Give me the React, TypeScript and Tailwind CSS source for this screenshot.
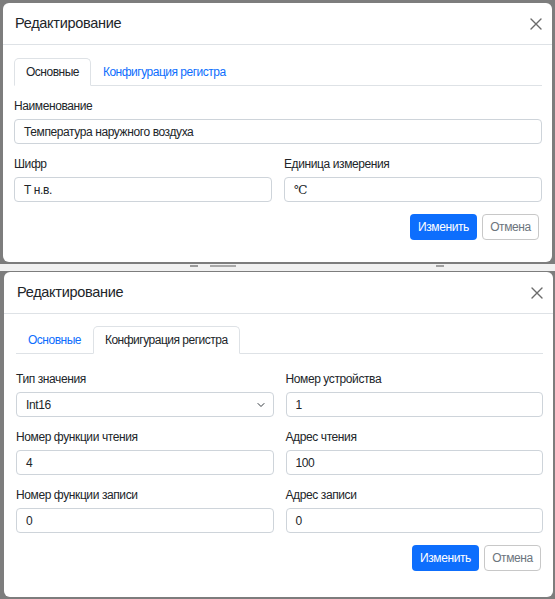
import React from "react";
import { ChevronDown } from "lucide-react";

const font = { fontFamily: '"Liberation Sans", Arial, sans-serif' };

function CloseX() {
  return (
    <svg width="12" height="12" viewBox="0 0 12 12" className="block">
      <path d="M1 1 L11 11 M11 1 L1 11" stroke="#6b6b6b" strokeWidth="1.4" strokeLinecap="round" />
    </svg>
  );
}

function Field({ label, value, serif }: { label: string; value: string; serif?: boolean }) {
  return (
    <div className="flex flex-col">
      <div className="text-[12px] tracking-[-0.4px] leading-[20px] mb-[3px] text-[#212529]">{label}</div>
      <div className="h-[25px] border border-[#ced4da] rounded-[4px] bg-white flex items-center pl-[9px] text-[12px] tracking-[-0.4px] text-[#212529]">
        {serif ? <span style={{ fontFamily: '"Liberation Serif", "DejaVu Serif", serif' }}>{value}</span> : value}
      </div>
    </div>
  );
}

function SelectField({ label, value }: { label: string; value: string }) {
  return (
    <div className="flex flex-col">
      <div className="text-[12px] tracking-[-0.4px] leading-[20px] mb-[3px] text-[#212529]">{label}</div>
      <div className="h-[25px] border border-[#ced4da] rounded-[4px] bg-white flex items-center justify-between pl-[9px] pr-[6px] text-[12px] tracking-[-0.4px] text-[#212529]">
        <span>{value}</span>
        <ChevronDown size={12} strokeWidth={2} color="#343a40" />
      </div>
    </div>
  );
}

function Tabs({ active }: { active: 0 | 1 }) {
  const names = ["Основные", "Конфигурация регистра"];
  return (
    <div className="flex border-b border-[#dee2e6]">
      {names.map((n, i) =>
        i === active ? (
          <div
            key={n}
            className="h-[28px] -mb-px px-[11px] flex items-center text-[12px] tracking-[-0.5px] text-[#212529] bg-white border border-[#dee2e6] border-b-white rounded-t-[5px]"
          >
            {n}
          </div>
        ) : (
          <div
            key={n}
            className="h-[28px] -mb-px px-[11px] flex items-center text-[12px] tracking-[-0.5px] text-[#0d6efd] border border-transparent"
          >
            {n}
          </div>
        )
      )}
    </div>
  );
}

function Buttons({ mr }: { mr: string }) {
  return (
    <div className={`flex justify-end gap-[5px] ${mr}`}>
      <div className="h-[26px] w-[67px] rounded-[4px] bg-[#0d6efd] text-white text-[12px] tracking-[-0.4px] flex items-center justify-center">
        Изменить
      </div>
      <div className="h-[26px] w-[57px] rounded-[4px] border border-[#c8c8c8] text-[#6c757d] text-[12px] tracking-[-0.4px] flex items-center justify-center bg-white">
        Отмена
      </div>
    </div>
  );
}

export default function App() {
  return (
    <div className="w-[555px] h-[599px] bg-[#7d7d7d] overflow-hidden" style={font}>
      {/* Modal 1 */}
      <div className="mt-[3px] ml-[3px] w-[549px] h-[259px] bg-white rounded-[6px] flex flex-col">
        <div className="h-[42px] border-b border-[#dee2e6] flex items-center justify-between pl-[12px] pr-[10px]">
          <div className="text-[14.5px] tracking-[-0.3px] text-[#212529]">Редактирование</div>
          <CloseX />
        </div>
        <div className="pt-[13px] pl-[11px] pr-[10px] flex flex-col">
          <Tabs active={0} />
          <div className="mt-[10px]">
            <Field label="Наименование" value="Температура наружного воздуха" />
          </div>
          <div className="mt-[10px] grid grid-cols-2 gap-[12px]">
            <Field label="Шифр" value="Т н.в." />
            <Field label="Единица измерения" value="℃" serif />
          </div>
          <div className="mt-[12px]">
            <Buttons mr="mr-[3px]" />
          </div>
        </div>
      </div>

      {/* strip between */}
      <div className="h-[2px]" />
      <div className="h-[7px] bg-[#f1f1f1] flex items-start">
        <div className="ml-[190px] mt-[1px] h-[2px] w-[8px] bg-[#9a9a9a]" />
        <div className="ml-[12px] mt-[1px] h-[2px] w-[26px] bg-[#a8a8a8]" />
        <div className="ml-[200px] mt-[1px] h-[2px] w-[8px] bg-[#a0a0a0]" />
      </div>
      <div className="h-[1px]" />

      {/* Modal 2 */}
      <div className="ml-[4px] w-[549px] h-[325px] bg-white rounded-[6px] flex flex-col">
        <div className="h-[42px] border-b border-[#dee2e6] flex items-center justify-between pl-[13px] pr-[10px]">
          <div className="text-[14.5px] tracking-[-0.3px] text-[#212529]">Редактирование</div>
          <CloseX />
        </div>
        <div className="pt-[12px] pl-[12px] pr-[10px] flex flex-col">
          <Tabs active={1} />
          <div className="mt-[15px] grid grid-cols-2 gap-[12px]">
            <SelectField label="Тип значения" value="Int16" />
            <Field label="Номер устройства" value="1" />
          </div>
          <div className="mt-[10px] grid grid-cols-2 gap-[12px]">
            <Field label="Номер функции чтения" value="4" />
            <Field label="Адрес чтения" value="100" />
          </div>
          <div className="mt-[10px] grid grid-cols-2 gap-[12px]">
            <Field label="Номер функции записи" value="0" />
            <Field label="Адрес записи" value="0" />
          </div>
          <div className="mt-[12px]">
            <Buttons mr="mr-[2px]" />
          </div>
        </div>
      </div>
    </div>
  );
}
